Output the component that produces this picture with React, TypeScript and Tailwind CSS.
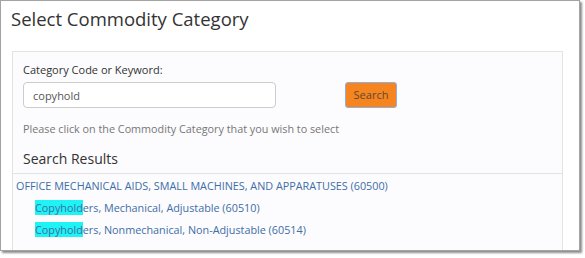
import React from "react";

const results = [
  { rest: "ers, Mechanical, Adjustable (60510)" },
  { rest: "ers, Nonmechanical, Non-Adjustable (60514)" },
];

const App = () => {
  return (
    <div className="w-[585px] h-[258px] bg-white font-['Open_Sans',sans-serif]">
      <div className="w-[580px] h-[251px] border border-[#a3a3a3] shadow-[2px_2px_2px_rgba(0,0,0,0.45)] overflow-hidden">
        <h1 className="pl-[10px] pt-[4px] text-[18.5px] leading-[28px] text-[#333333]">
          Select Commodity Category
        </h1>

        <div className="ml-[11px] mt-[18px] w-[551px] h-[220px] border border-[#e3e3e3] bg-[#fcfbfd]">
          <div className="px-[10px] pt-[9px]">
            <label className="block text-[11px] leading-[18px] font-medium text-[#333333]">
              Category Code or Keyword:
            </label>
            <div className="mt-[3px] flex items-center">
              <input
                readOnly
                value="copyhold"
                className="w-[253px] h-[26px] rounded-[4px] border border-[#cccccc] bg-white px-[9px] text-[11px] text-[#555555] outline-none"
              />
              <button className="ml-[69px] h-[26px] w-[52px] rounded-[3px] border border-[#8ab0e6] bg-[#f6841f] text-[11px] text-[#5a4a3a]">
                Search
              </button>
            </div>
            <p className="mt-[12px] text-[10.8px] leading-[18px] text-[#777777]">
              Please click on the Commodity Category that you wish to select
            </p>
            <h2 className="mt-[10px] text-[14px] leading-[22px] text-[#333333]">
              Search Results
            </h2>
          </div>

          <div className="mt-[3px] border-t border-[#e3e3e3] pt-[1px] text-[10.8px] text-[#3c6ea8]">
            <div className="pl-[3px] leading-[22px]">
              OFFICE MECHANICAL AIDS, SMALL MACHINES, AND APPARATUSES (60500)
            </div>
            {results.map((r) => (
              <div key={r.rest} className="pl-[22px] leading-[22px]">
                <span className="bg-[#1ff3f3]">Copyhold</span>
                {r.rest}
              </div>
            ))}
          </div>
        </div>
      </div>
    </div>
  );
};

export default App;
